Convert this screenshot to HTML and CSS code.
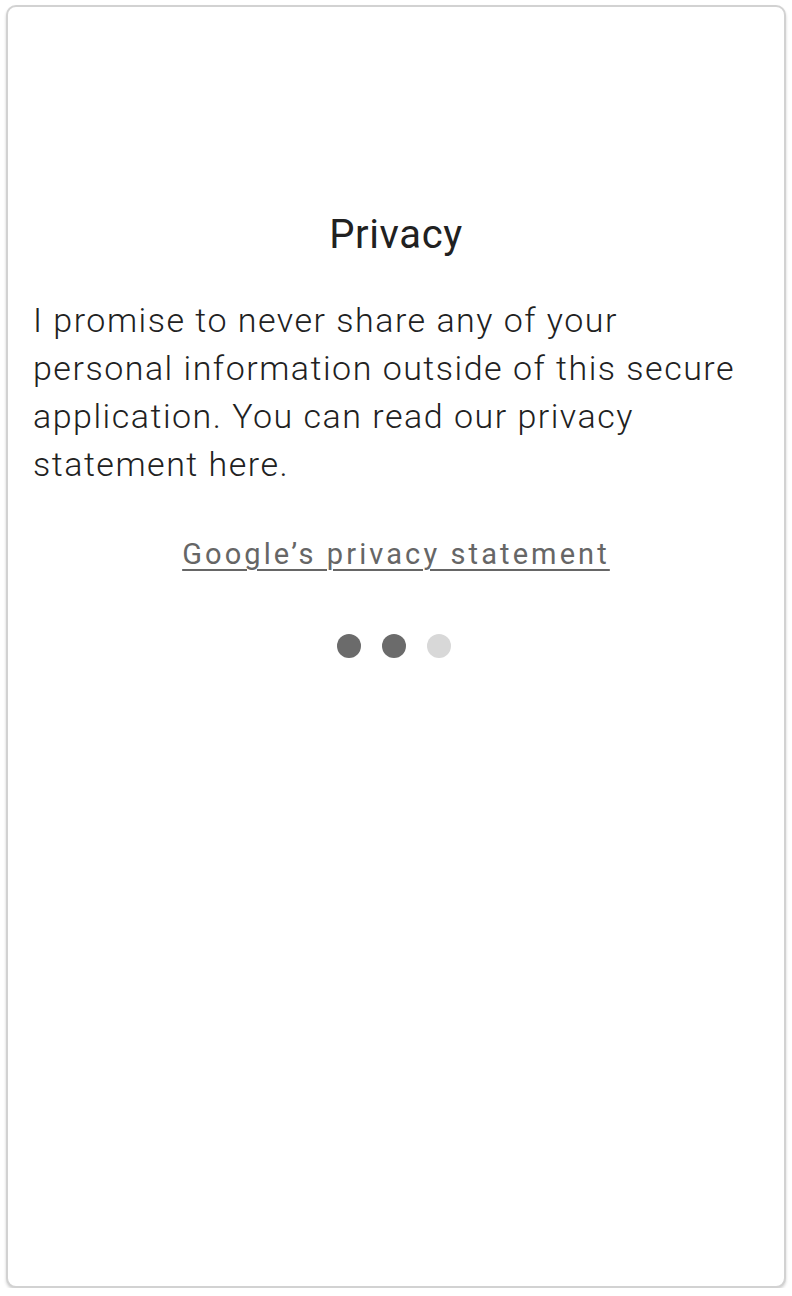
FILE: index.html
```html
<!DOCTYPE html>
<html>
<head>
<meta charset="utf-8">
<link rel="stylesheet" href="styles.css">
</head>
<body>
<div class="card">
  <h1 class="title">Privacy</h1>
  <p class="body-text">I promise to never share any of your personal information outside of this secure application. You can read our privacy statement here.</p>
  <div class="link-row"><a class="link" href="#">Google’s privacy statement</a></div>
  <div class="dots">
    <span class="dot dot-on"></span>
    <span class="dot dot-on"></span>
    <span class="dot"></span>
  </div>
</div>
</body>
</html>
```

FILE: styles.css
```css
html, body {
  margin: 0;
  padding: 0;
  background: #ffffff;
}
body {
  padding: 5px 6px 0 6px;
  font-family: Roboto, "Noto Sans", sans-serif;
}
.card {
  box-sizing: border-box;
  width: 780px;
  height: 1283px;
  border: 2px solid #d2d2d2;
  border-radius: 10px;
  box-shadow: 0 2px 3px rgba(0,0,0,0.18);
  padding: 204px 25px 0 25px;
  background: #fff;
}
.title {
  margin: 0;
  font-size: 40px;
  font-weight: 400;
  line-height: 48px;
  letter-spacing: 0.6px;
  text-align: center;
  color: #212121;
}
.body-text {
  margin: 37px 0 0 0;
  max-width: 712px;
  font-size: 34px;
  font-weight: 300;
  line-height: 48px;
  letter-spacing: 1.5px;
  color: #212121;
}
.link-row {
  margin-top: 42px;
  text-align: center;
  line-height: 48px;
}
.link {
  font-size: 29px;
  font-weight: 400;
  letter-spacing: 3.1px;
  color: #666666;
  text-decoration: underline;
  text-underline-offset: 5px;
  text-decoration-thickness: 2px;
}
.dots {
  display: flex;
  justify-content: center;
  gap: 21px;
  margin-top: 51px;
  padding-right: 4px;
}
.dot {
  width: 24px;
  height: 24px;
  border-radius: 50%;
  background: #d8d8d8;
}
.dot-on {
  background: #6b6b6b;
}
```
